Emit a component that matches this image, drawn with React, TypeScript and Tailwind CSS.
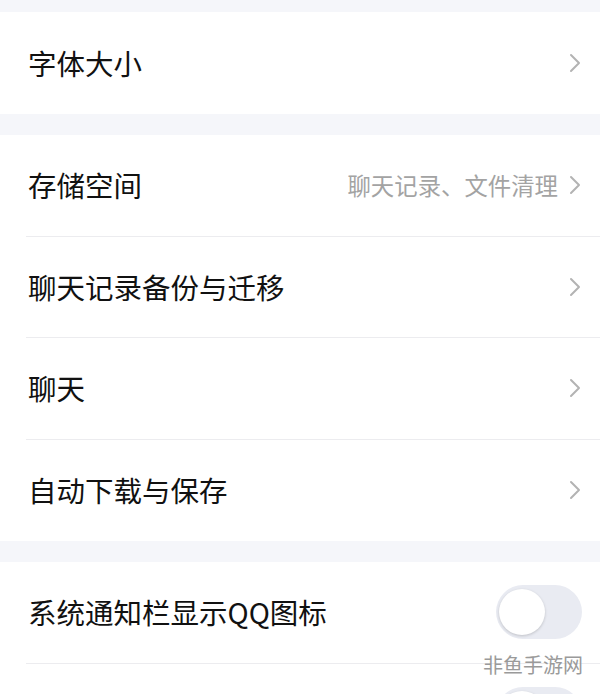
import React from "react";

const font = { fontFamily: '"Noto Sans CJK SC", "Noto Sans", sans-serif' };

function Chevron() {
  return (
    <svg width="14" height="20" viewBox="0 0 14 20" className="shrink-0">
      <path d="M3 2 L11 10 L3 18" fill="none" stroke="#b3b3b3" strokeWidth="2" strokeLinecap="round" strokeLinejoin="round" />
    </svg>
  );
}

function Toggle() {
  return (
    <div className="relative h-[54px] w-[86px] rounded-full bg-[#e9ebf2]">
      <div className="absolute left-[3px] top-[4px] h-[46px] w-[46px] rounded-full bg-white shadow-[0_1px_3px_rgba(0,0,0,0.18)]" />
    </div>
  );
}

interface RowProps {
  label: string;
  value?: string;
  toggle?: boolean;
  divider?: boolean;
  tall?: boolean;
}

function Row({ label, value, toggle, divider, tall }: RowProps) {
  return (
    <div className="pl-[26px]">
      <div
        className={
          "flex items-center pr-[18px] " +
          (tall ? "h-[102px] " : "h-[101.5px] ") +
          (divider ? "border-b border-[#ececef]" : "")
        }
      >
        <span className="pl-[2px] text-[28.5px] leading-none text-[#111111]">{label}</span>
        <div className="ml-auto flex items-center gap-[10px]">
          {value && <span className="text-[23.4px] leading-none text-[#a3a3a3]">{value}</span>}
          {toggle ? <Toggle /> : <Chevron />}
        </div>
      </div>
    </div>
  );
}

export default function App() {
  return (
    <div className="relative h-[694px] w-[600px] overflow-hidden bg-[#f5f6fa]" style={font}>
      <div className="h-[12px]" />
      <div className="bg-white">
        <Row label="字体大小" tall />
      </div>
      <div className="h-[21px]" />
      <div className="bg-white">
        <Row label="存储空间" value="聊天记录、文件清理" divider />
        <Row label="聊天记录备份与迁移" divider />
        <Row label="聊天" divider />
        <Row label="自动下载与保存" />
      </div>
      <div className="h-[21px]" />
      <div className="bg-white">
        <Row label="系统通知栏显示QQ图标" toggle divider />
        <Row label="" toggle />
      </div>
      <div className="absolute left-[483px] top-[655px] text-[20px] leading-none text-[#9a9a9a]">非鱼手游网</div>
    </div>
  );
}
